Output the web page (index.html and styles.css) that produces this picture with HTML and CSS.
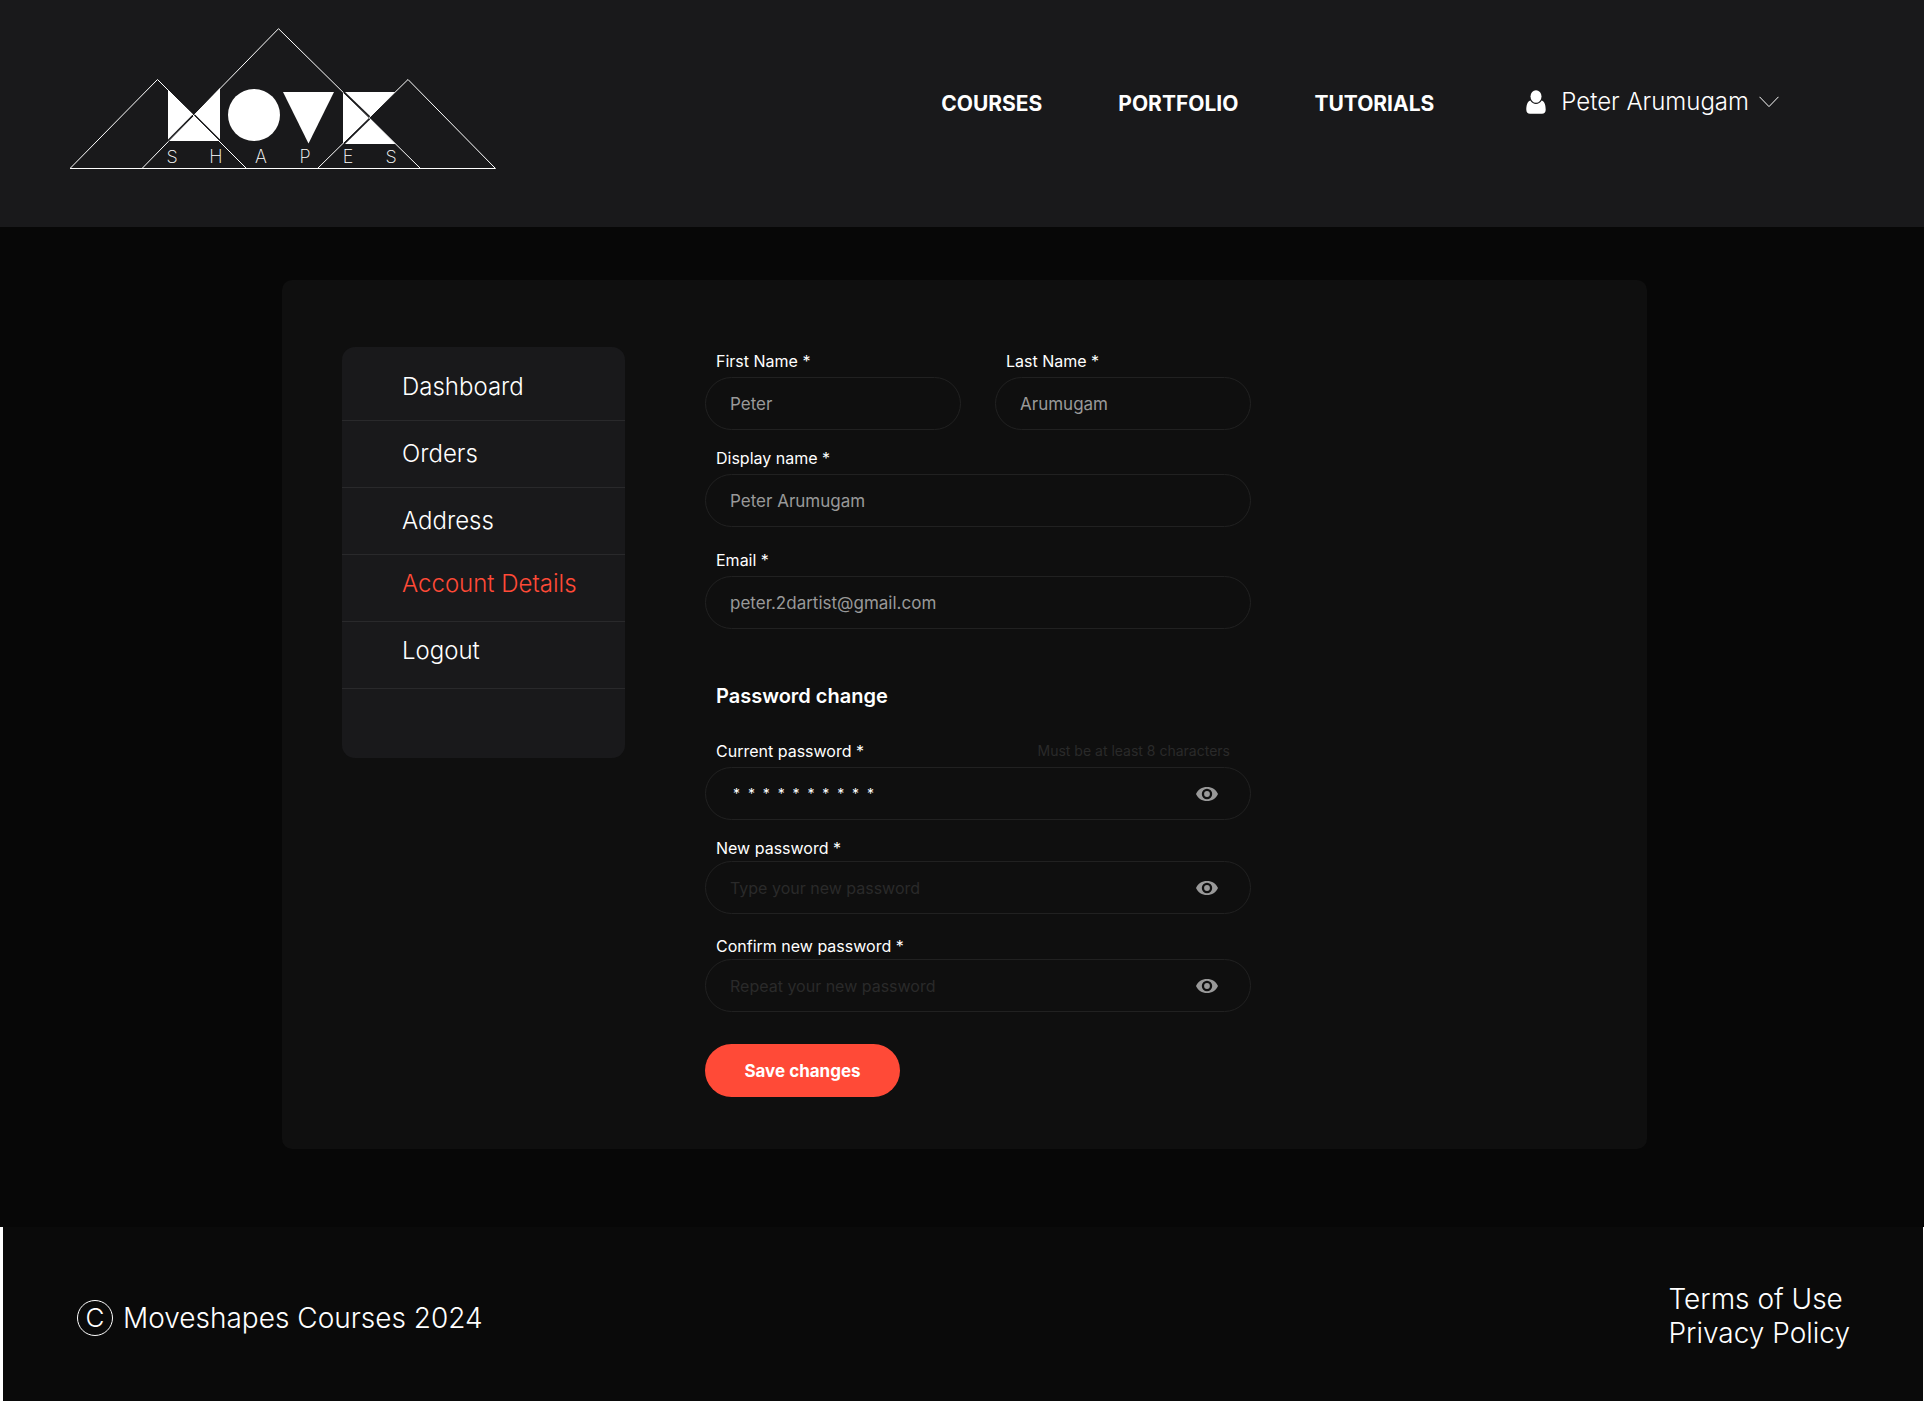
FILE: index.html
```html
<!DOCTYPE html>
<html lang="en">
<head>
<meta charset="utf-8">
<meta name="viewport" content="width=device-width, initial-scale=1">
<title>Account Details – Moveshapes</title>
<link rel="stylesheet" href="styles.css">
</head>
<body>
<header class="site-header">
  <a class="logo" href="#" aria-label="Move Shapes home">
    <svg width="427" height="142" viewBox="70 28 427 142">
      <g fill="none" stroke="#fff" stroke-width="1">
        <path d="M70 168.500H495.500"/>
        <path d="M70 168.500L157.500 79.500L246.500 168.500"/>
        <path d="M142 168.500L278.500 28.700L420.500 168.500"/>
        <path d="M317.500 168.500L408 79.500L495.500 168.500"/>
      </g>
      <g fill="#fff">
        <path d="M168 90L193 114.300L168 139.500Z"/>
        <path d="M220 88V139.500L194.700 114.300Z"/>
        <path d="M194 115.500L219.500 141H168.500Z"/>
        <circle cx="254" cy="115" r="26"/>
        <path d="M283 92H334L308.500 143.500Z"/>
        <path d="M343 92.500L369.500 118L343 143.500Z"/>
        <path d="M345 92H395L370.500 116.500Z"/>
        <path d="M370.500 119L395.500 144H345Z"/>
      </g>
      <g stroke="#19191b" stroke-width="1">
        <path d="M168 141.500L193 116"/>
        <path d="M194 114.500L220 140.500"/>
        <path d="M343.500 92.500L369 117.500"/>
        <path d="M344 143L369.500 118"/>
      </g>
      <text class="logo-word" text-anchor="middle" y="163" x="172 216 261 305 348 391">SHAPES</text>
    </svg>
  </a>
  <nav class="main-nav">
    <a href="#">COURSES</a>
    <a href="#">PORTFOLIO</a>
    <a href="#">TUTORIALS</a>
  </nav>
  <button class="user-menu" type="button">
    <svg width="20" height="24" viewBox="0 0 20 24" fill="#fff">
      <ellipse cx="10" cy="6.500" rx="5.500" ry="6.300"/>
      <path d="M4.300 10.500C1.200 11.500 0.300 15.500 0.300 19.800C0.300 22.500 1.800 23.700 4 23.700H16C18.200 23.700 19.700 22.500 19.700 19.800C19.700 15.500 18.800 11.500 15.700 10.500C14.300 12.900 12.300 13.900 10 13.900C7.700 13.900 5.700 12.900 4.300 10.500Z"/>
    </svg>
    <span>Peter Arumugam</span>
    <svg width="20" height="12" viewBox="0 0 20 12" fill="none" stroke="#fff"><path d="M0.500 0.800L10 10.600L19.500 0.800"/></svg>
  </button>
</header>

<main class="page">
  <div class="card">
    <nav class="side-nav">
      <a href="#">Dashboard</a>
      <a href="#">Orders</a>
      <a href="#">Address</a>
      <a class="tight active" href="#">Account Details</a>
      <a class="tight" href="#">Logout</a>
    </nav>
    <form class="account-form">
      <div class="name-row">
        <div class="field">
          <label for="first">First Name *</label>
          <input id="first" type="text" value="Peter">
        </div>
        <div class="field">
          <label for="last">Last Name *</label>
          <input id="last" type="text" value="Arumugam">
        </div>
      </div>
      <div class="field">
        <label for="display">Display name *</label>
        <input id="display" type="text" value="Peter Arumugam">
      </div>
      <div class="field email">
        <label for="email">Email *</label>
        <input id="email" type="email" value="peter.2dartist@gmail.com">
      </div>
      <h2>Password change</h2>
      <div class="field">
        <div class="label-row">
          <label for="current">Current password *</label>
          <span class="hint">Must be at least 8 characters</span>
        </div>
        <div class="secret">
          <input id="current" class="masked" type="text" value="*  *  *  *  *  *  *  *  *  *">
          <button type="button" aria-label="Show current password"><svg width="22" height="14" viewBox="0 0 22 14"><path fill="#999" fill-rule="evenodd" d="M11 0C6 0 2 2.600 0 7C2 11.400 6 14 11 14C16 14 20 11.400 22 7C20 2.600 16 0 11 0ZM11 1.800A5.200 5.200 0 1 1 11 12.200A5.200 5.200 0 1 1 11 1.800Z"/><circle cx="11" cy="7" r="2.900" fill="#999"/></svg></button>
        </div>
      </div>
      <div class="field new-field">
        <label for="new">New password *</label>
        <div class="secret">
          <input id="new" type="text" placeholder="Type your new password">
          <button type="button" aria-label="Show new password"><svg width="22" height="14" viewBox="0 0 22 14"><path fill="#999" fill-rule="evenodd" d="M11 0C6 0 2 2.600 0 7C2 11.400 6 14 11 14C16 14 20 11.400 22 7C20 2.600 16 0 11 0ZM11 1.800A5.200 5.200 0 1 1 11 12.200A5.200 5.200 0 1 1 11 1.800Z"/><circle cx="11" cy="7" r="2.900" fill="#999"/></svg></button>
        </div>
      </div>
      <div class="field new-field">
        <label for="confirm">Confirm new password *</label>
        <div class="secret">
          <input id="confirm" type="text" placeholder="Repeat your new password">
          <button type="button" aria-label="Show repeated password"><svg width="22" height="14" viewBox="0 0 22 14"><path fill="#999" fill-rule="evenodd" d="M11 0C6 0 2 2.600 0 7C2 11.400 6 14 11 14C16 14 20 11.400 22 7C20 2.600 16 0 11 0ZM11 1.800A5.200 5.200 0 1 1 11 12.200A5.200 5.200 0 1 1 11 1.800Z"/><circle cx="11" cy="7" r="2.900" fill="#999"/></svg></button>
        </div>
      </div>
      <button class="save" type="submit">Save changes</button>
    </form>
  </div>
</main>

<footer class="site-footer">
  <p class="copyright"><span class="mark">C</span>Moveshapes Courses 2024</p>
  <div class="legal">
    <a href="#">Terms of Use</a>
    <a href="#">Privacy Policy</a>
  </div>
</footer>
</body>
</html>
```
FILE: styles.css
```css
* {
  box-sizing: border-box;
}

body {
  margin: 0;
  min-height: 100vh;
  display: flex;
  flex-direction: column;
  background: #070707;
  color: #fff;
  font-family: Inter, "Liberation Sans", sans-serif;
  font-size: 16px;
}

a {
  color: inherit;
  text-decoration: none;
}

button {
  padding: 0;
  border: 0;
  background: none;
  color: inherit;
  font: inherit;
  cursor: pointer;
}

svg {
  display: block;
}

.site-header {
  display: flex;
  align-items: flex-start;
  padding: 28px 145px 57px 70px;
  background: #19191b;
}

.logo-word {
  fill: #fff;
  font-size: 18px;
  font-weight: 200;
}

.main-nav {
  display: flex;
  gap: 76px;
  margin: 62px 92px 0 auto;
  font-size: 21px;
  line-height: 28px;
  font-weight: 700;
}

.user-menu {
  display: flex;
  align-items: center;
  gap: 15px;
  margin-top: 58px;
  font-size: 24px;
  line-height: 32px;
  font-weight: 300;
}

.user-menu span {
  margin-right: -5px;
}

.page {
  flex: 1;
  padding: 53px 277px 78px 282px;
}

.card {
  display: flex;
  align-items: flex-start;
  gap: 80px;
  padding: 67px 60px 52px;
  border-radius: 10px;
  background: #0f0f0f;
}

.side-nav {
  width: 283px;
  padding: 7px 0 69px;
  border-radius: 13px;
  background: #19191b;
  font-size: 24px;
  line-height: 30px;
  font-weight: 300;
}

.side-nav a {
  display: flex;
  align-items: center;
  height: 67px;
  padding-left: 60px;
  border-bottom: 1px solid #29292b;
}

.side-nav .tight {
  padding-bottom: 8px;
}

.side-nav .active {
  color: #ff4a37;
}

.account-form {
  width: 546px;
  padding-top: 4px;
}

.name-row {
  display: grid;
  grid-template-columns: 1fr 1fr;
  gap: 34px;
}

.field {
  display: flex;
  flex-direction: column;
  gap: 6px;
  margin-bottom: 18px;
}

.field label {
  padding-left: 11px;
  line-height: 20px;
}

.field input {
  width: 100%;
  height: 53px;
  padding: 0 24px;
  border: 1px solid #212121;
  border-radius: 27px;
  outline: 0;
  background: transparent;
  color: #999;
  font: inherit;
  font-size: 17px;
}

.field input::placeholder {
  color: #2a2a2a;
  font-size: 16px;
  opacity: 1;
}

.field .masked {
  padding-left: 27px;
  color: #fff;
  font-size: 14px;
}

.email {
  margin: 23px 0 0;
}

h2 {
  margin: 53px 0 31px 11px;
  font-size: 20px;
  line-height: 28px;
  font-weight: 600;
}

.label-row {
  display: flex;
  justify-content: space-between;
  padding-right: 21px;
}

.hint {
  color: #2a2a2a;
  font-size: 14px;
  line-height: 20px;
}

.secret {
  display: grid;
  align-items: center;
}

.secret input,
.secret button {
  grid-area: 1 / 1;
}

.secret button {
  justify-self: end;
  margin-right: 33px;
}

.new-field {
  gap: 3px;
  margin-bottom: 22px;
}

.save {
  width: 195px;
  height: 53px;
  margin-top: 10px;
  border-radius: 27px;
  background: #ff4a37;
  font-size: 17px;
  font-weight: 700;
}

.site-footer {
  display: flex;
  justify-content: space-between;
  align-items: center;
  padding: 55px 73px 51px 74px;
  border-left: 3px solid #fff;
  border-right: 1px solid #fff;
  background: #0a0a0a;
  font-size: 28px;
  line-height: 34px;
  font-weight: 300;
}

.copyright {
  display: flex;
  align-items: center;
  gap: 10px;
  margin: 0;
  padding-top: 4px;
}

.mark {
  width: 36px;
  height: 36px;
  border: 1px solid #fff;
  border-radius: 50%;
  text-align: center;
  font-size: 26px;
}

.legal {
  display: flex;
  flex-direction: column;
}
```
